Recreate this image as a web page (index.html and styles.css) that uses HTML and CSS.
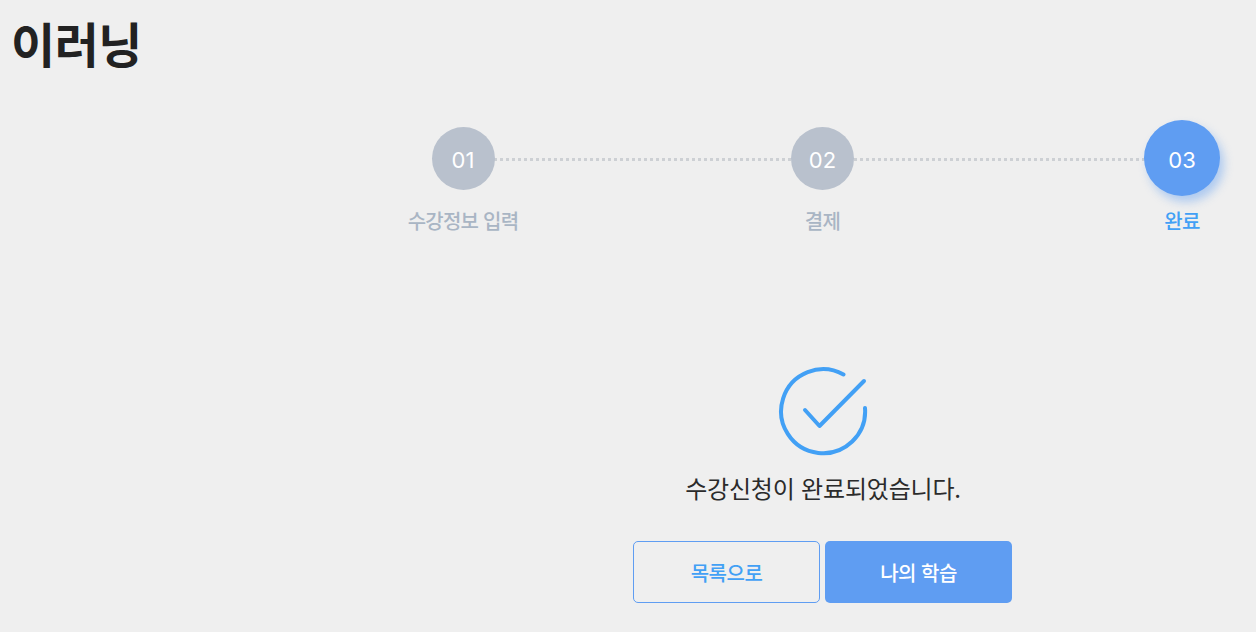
FILE: index.html

```html
<!DOCTYPE html>
<html lang="ko">
<head>
  <meta charset="UTF-8" />
  <meta name="viewport" content="width=device-width, initial-scale=1.0" />
  <title>이러닝</title>
  <link rel="stylesheet" href="styles.css">
</head>
<body>
  <h1 class="page-title">이러닝</h1>
  <div class="content">
    <div class="steps">
      <div class="step">
        <div class="step-circle-wrap"><div class="step-circle">01</div></div>
        <div class="step-label">수강정보 입력</div>
      </div>
      <div class="step">
        <div class="step-circle-wrap"><div class="step-circle">02</div></div>
        <div class="step-label">결제</div>
      </div>
      <div class="step active">
        <div class="step-circle-wrap"><div class="step-circle">03</div></div>
        <div class="step-label">완료</div>
      </div>
    </div>
    <div class="complete">
      <svg class="complete-icon" width="90" height="90" viewBox="0 0 90 90" fill="none" stroke="#42a0f5" stroke-width="4" stroke-linecap="round" stroke-linejoin="round">
        <path d="M65.500 8.500 A42 42 0 1 0 87 42" />
        <path d="M27 44 L41.500 60 L86 15" />
      </svg>
      <p class="complete-text">수강신청이 완료되었습니다.</p>
      <div class="buttons">
        <a class="btn btn-outline">목록으로</a>
        <a class="btn btn-primary">나의 학습</a>
      </div>
    </div>
  </div>
</body>
</html>
```

FILE: styles.css

```css
body {
  font-family: "Noto Sans CJK KR", "Noto Sans", sans-serif;
  margin: 0;
  height: 632px;
  overflow: hidden;
  background-color: #efefef;
}
.page-title {
  margin: 0;
  padding: 11px 0 0 11px;
  font-size: 48px;
  line-height: 62px;
  font-weight: 700;
  letter-spacing: -0.5px;
  color: #222;
}
.content {
  margin-left: 390px;
}
.steps {
  display: flex;
  justify-content: space-between;
  position: relative;
  margin-top: 47px;
  margin-right: 1px;
}
.steps::before {
  content: "";
  position: absolute;
  left: 73px;
  right: 73px;
  top: 38px;
  border-top: 3px dotted #cdd0d4;
}
.step {
  width: 146px;
  display: flex;
  flex-direction: column;
  align-items: center;
  position: relative;
}
.step-circle-wrap {
  height: 76px;
  display: flex;
  align-items: center;
}
.step-circle {
  width: 63px;
  height: 63px;
  box-sizing: border-box;
  padding-top: 3px;
  border-radius: 50%;
  background-color: #b9c1cd;
  color: white;
  font-family: Inter, sans-serif;
  font-size: 22px;
  display: flex;
  justify-content: center;
  align-items: center;
}
.step-label {
  margin-top: 11px;
  font-size: 20px;
  line-height: 28px;
  font-weight: 500;
  letter-spacing: -0.75px;
  color: #a9b5c4;
}
.step.active .step-circle {
  width: 76px;
  height: 76px;
  background-color: #5f9df2;
  box-shadow: 4px 6px 10px rgba(95, 157, 242, 0.45);
}
.step.active .step-label {
  color: #42a0f5;
}
.complete {
  display: flex;
  flex-direction: column;
  align-items: center;
  margin-top: 131px;
}
.complete-icon {
  display: block;
}
.complete-text {
  margin: 15px 0 0;
  font-size: 24px;
  line-height: 34px;
  letter-spacing: -0.2px;
  color: #2b2b2b;
}
.buttons {
  display: flex;
  gap: 5px;
  margin-top: 36px;
  margin-right: 1px;
}
.btn {
  width: 187px;
  height: 62px;
  box-sizing: border-box;
  border-radius: 5px;
  display: flex;
  justify-content: center;
  align-items: center;
  font-size: 20px;
  font-weight: 500;
  letter-spacing: -0.5px;
}
.btn-outline {
  border: 1px solid #5f9df2;
  color: #42a0f5;
}
.btn-primary {
  background-color: #5f9df2;
  color: white;
}
```
